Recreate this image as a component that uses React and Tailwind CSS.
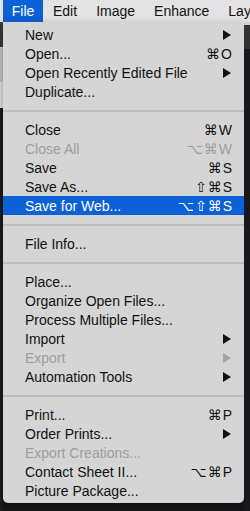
import React from "react";

const Arrow = ({ disabled }) => (
  <svg width="8" height="10" viewBox="0 0 8 10" className="shrink-0 mr-[2px]">
    <path d="M0 0 L8 5 L0 10 Z" fill={disabled ? "#a3a3a3" : "#111"} />
  </svg>
);

const menu = [
  { label: "New", arrow: true },
  { label: "Open...", keys: "⌘O" },
  { label: "Open Recently Edited File", arrow: true },
  { label: "Duplicate..." },
  "sep",
  { label: "Close", keys: "⌘W" },
  { label: "Close All", keys: "⌥⌘W", disabled: true },
  { label: "Save", keys: "⌘S" },
  { label: "Save As...", keys: "⇧⌘S" },
  { label: "Save for Web...", keys: "⌥⇧⌘S", active: true },
  "sep",
  { label: "File Info..." },
  "sep",
  { label: "Place..." },
  { label: "Organize Open Files..." },
  { label: "Process Multiple Files..." },
  { label: "Import", arrow: true },
  { label: "Export", arrow: true, disabled: true },
  { label: "Automation Tools", arrow: true },
  "sep",
  { label: "Print...", keys: "⌘P" },
  { label: "Order Prints...", arrow: true },
  { label: "Export Creations...", disabled: true },
  { label: "Contact Sheet II...", keys: "⌥⌘P" },
  { label: "Picture Package..." },
];

const MenuRow = ({ item }) => {
  const color = item.active
    ? "text-white"
    : item.disabled
    ? "text-[#9d9d9d]"
    : "text-[#111]";
  return (
    <div
      className={`flex items-center justify-between h-[19px] pl-[22px] pr-[11px] ${color} ${
        item.active ? "bg-[#0d61d6]" : ""
      }`}
    >
      <span>{item.label}</span>
      {item.keys && <span className="tracking-[1px]">{item.keys}</span>}
      {item.arrow && <Arrow disabled={item.disabled} />}
    </div>
  );
};

export default function App() {
  return (
    <div
      className="w-[250px] h-[511px] bg-[#17161b] flex flex-col overflow-hidden text-[14px] leading-none"
      style={{ fontFamily: '"Liberation Sans", "DejaVu Sans", sans-serif' }}
    >
      {/* menu bar */}
      <div className="h-[22px] bg-[#e3e3e3] flex items-center text-[#111] shrink-0 whitespace-nowrap">
        <div className="ml-[3px] w-[40px] h-full shrink-0 bg-[#0d61d6] text-white flex items-center justify-center">
          File
        </div>
        <span className="ml-[10px] shrink-0">Edit</span>
        <span className="ml-[19px] shrink-0">Image</span>
        <span className="ml-[19px] shrink-0">Enhance</span>
        <span className="ml-[19px] shrink-0">Layer</span>
      </div>

      <div className="flex flex-1 min-h-0">
        {/* left strip (app behind) */}
        <div className="w-[3px] flex flex-col shrink-0">
          <div className="h-[25px] bg-[#3b3b3b]" />
          <div className="h-[35px] bg-[#c9c9c9]" />
          <div className="h-[26px] bg-[#e6e6e6]" />
          <div className="flex-1 bg-[#1c1b20]" />
        </div>

        {/* the File menu */}
        <div className="w-[241px] shrink-0 self-start bg-[#d5d5d5] rounded-b-[5px] pt-[3px] pb-[3px] shadow-[0_4px_10px_rgba(0,0,0,0.4)] whitespace-nowrap">
          {menu.map((item, i) =>
            item === "sep" ? (
              <div key={i} className="h-[19px] flex items-center">
                <div className="w-full h-[2px] bg-[#bebebe]" />
              </div>
            ) : (
              <MenuRow key={i} item={item} />
            )
          )}
        </div>

        {/* right strip */}
        <div className="flex-1 flex flex-col">
          <div className="h-[3px] bg-[#d0d0d0]" />
          <div className="h-[24px] bg-[#333333]" />
          <div className="flex-1 bg-[#19181d]" />
        </div>
      </div>
    </div>
  );
}
